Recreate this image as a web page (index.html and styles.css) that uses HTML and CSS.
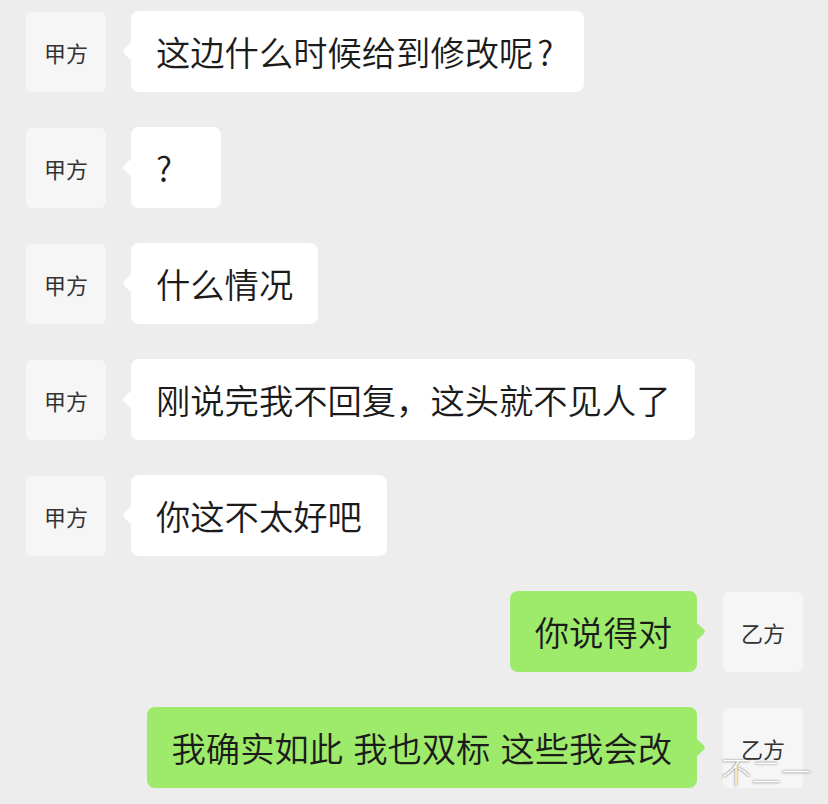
FILE: index.html
```html
<!DOCTYPE html>
<html lang="zh-CN">
<head>
  <meta charset="UTF-8" />
  <title>聊天记录</title>
  <link rel="stylesheet" href="styles.css">
</head>
<body>
  <div class="chat">
    <div class="row">
      <div class="avatar">甲方</div>
      <div class="bubble">这边什么时候给到修改呢<span class="q">?</span></div>
    </div>
    <div class="row">
      <div class="avatar">甲方</div>
      <div class="bubble">?</div>
    </div>
    <div class="row">
      <div class="avatar">甲方</div>
      <div class="bubble">什么情况</div>
    </div>
    <div class="row">
      <div class="avatar">甲方</div>
      <div class="bubble">刚说完我不回复，这头就不见人了</div>
    </div>
    <div class="row">
      <div class="avatar">甲方</div>
      <div class="bubble">你这不太好吧</div>
    </div>
    <div class="row mine">
      <div class="avatar">乙方</div>
      <div class="bubble">你说得对</div>
    </div>
    <div class="row mine">
      <div class="avatar">乙方</div>
      <div class="bubble">我确实如此 我也双标 这些我会改</div>
    </div>
  </div>
  <div class="watermark">不二一</div>
</body>
</html>
```

FILE: styles.css
```css
/* base */
* {
  box-sizing: border-box;
}

body {
  margin: 0;
  background-color: #ededed;
  font-family: "Noto Sans CJK SC", "Noto Sans", sans-serif;
  color: #1b1b1b;
  width: 828px;
  height: 804px;
  overflow: hidden;
  position: relative;
}

.chat {
  display: flex;
  flex-direction: column;
  gap: 35px;
  padding: 11px 25px 0 26px;
}

.row {
  display: flex;
  align-items: flex-start;
  gap: 25px;
}

.row.mine {
  flex-direction: row-reverse;
  gap: 26px;
}

.avatar {
  width: 80px;
  height: 80px;
  flex-shrink: 0;
  margin-top: 1px;
  border-radius: 6px;
  background-color: #f6f6f6;
  display: flex;
  align-items: center;
  justify-content: center;
  font-size: 22px;
  color: #333;
}

.bubble {
  position: relative;
  height: 81px;
  min-width: 90px;
  line-height: 81px;
  padding: 0 25px;
  border-radius: 8px;
  background-color: #fff;
  font-size: 34.3px;
  font-weight: 350;
  word-spacing: 2.5px;
  white-space: nowrap;
}

.bubble .q {
  padding: 0 6px 0 4px;
}

/* little tail next to the avatar */
.bubble::before {
  content: "";
  position: absolute;
  top: 34px;
  left: -6px;
  width: 13px;
  height: 13px;
  background-color: inherit;
  border-radius: 2px;
  transform: rotate(45deg);
}

.mine .bubble {
  background-color: #9eea6a;
}

.mine .bubble::before {
  left: auto;
  right: -6px;
}

.watermark {
  position: absolute;
  left: 721px;
  top: 752px;
  font-size: 30px;
  font-weight: 300;
  line-height: 36px;
  color: #fff;
  text-shadow: 0 0 1px rgba(0, 0, 0, 0.6), 0 0 3px rgba(0, 0, 0, 0.35);
}
```
